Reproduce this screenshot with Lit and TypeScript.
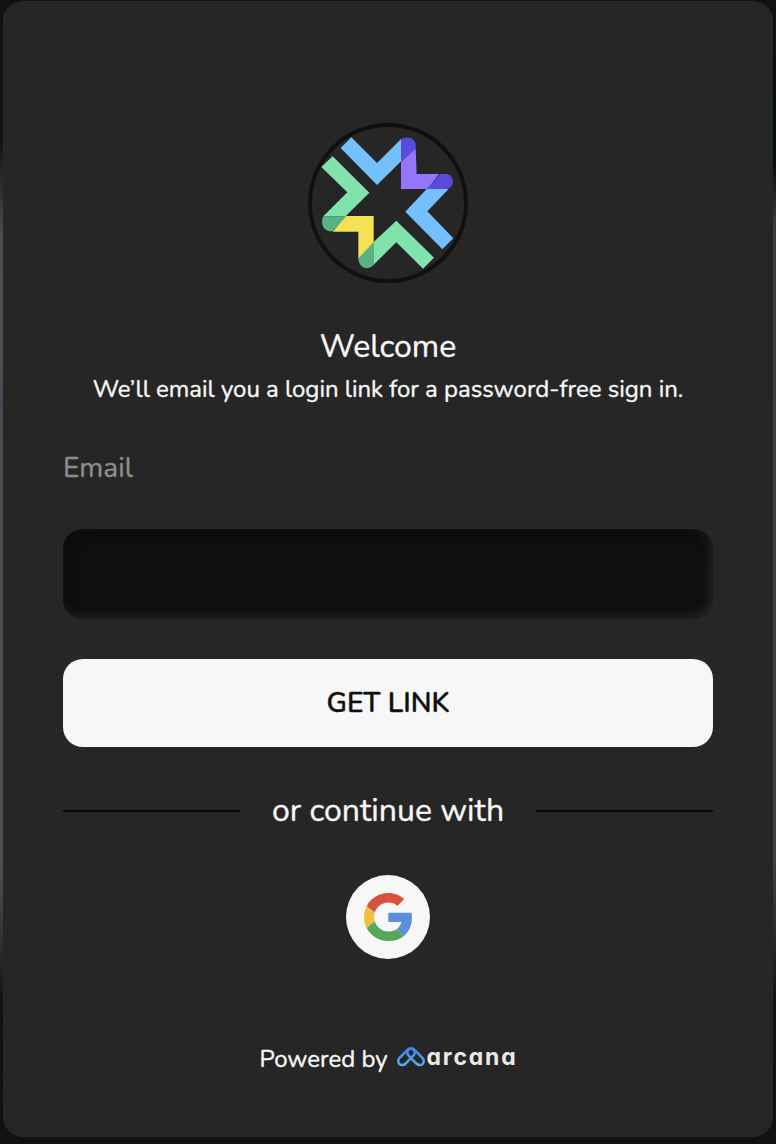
import { LitElement, html, css } from "lit";
import { customElement } from "lit/decorators.js";

@customElement("app-root")
export class AppRoot extends LitElement {
  static styles = css`
    :host {
      display: block;
      box-sizing: border-box;
      height: 1144px;
      padding: 1px 3px 7px;
      background:
        linear-gradient(#131212 0, #131212 140px, #4c4c4c 235px, #515151 340px, #434a56 400px, #4c4c4c 470px, #505050 860px, #404040 910px, #131212 1000px, #111 1144px) left / 50% 100% no-repeat,
        linear-gradient(#131212 0, #0a0e0d 100px, #0a0e0d 165px, #3c3d3c 225px, #3f3f3f 860px, #343434 910px, #131212 1000px, #111 1144px) right / 50% 100% no-repeat;
      font-family: Nunito, Lato, "Open Sans", sans-serif;
      color: #f7f7f7;
    }
    .card {
      box-sizing: border-box;
      height: 1136px;
      padding: 122px 60px 0;
      border-radius: 20px;
      background: #262626;
      display: flex;
      flex-direction: column;
      align-items: center;
      -webkit-text-stroke: 0.35px currentColor;
    }
    .logo { width: 160px; height: 160px; flex: none; }
    h1, p { margin: 0; font-weight: 400; white-space: nowrap; }
    h1 { margin-top: 42px; font-size: 32px; line-height: 44px; }
    .hint { margin-top: 4px; font-size: 24px; line-height: 33px; }
    form { align-self: stretch; display: flex; flex-direction: column; }
    label { margin-top: 43px; font-size: 28px; line-height: 38px; color: #8d8d8d; font-weight: 400; }
    input {
      box-sizing: border-box;
      height: 90px;
      margin: 42px 0 0;
      padding: 0 30px;
      border: 0;
      outline: 0;
      border-radius: 20px;
      background: #101010;
      color: #f7f7f7;
      font: inherit;
      font-size: 28px;
      box-shadow: inset -4px -4px 8px rgba(57, 57, 57, 0.44), inset 10px 10px 20px rgba(11, 11, 11, 0.5);
    }
    button { border: 0; padding: 0; font-family: inherit; }
    .submit {
      height: 88px;
      margin: 40px 0 0;
      border-radius: 20px;
      background: #f7f7f7;
      color: #101010;
      font-size: 28px;
      font-weight: 600;
      letter-spacing: 0;
    }
    .divider {
      align-self: stretch;
      margin-top: 42px;
      height: 44px;
      display: flex;
      align-items: center;
      gap: 32px;
      font-size: 32px;
      line-height: 44px;
      font-weight: 400;
      white-space: nowrap;
    }
    .divider::before, .divider::after { content: ""; flex: 1; height: 2px; background: #080808; }
    .divider span { width: 232px; text-align: center; }
    .google {
      width: 84px;
      height: 84px;
      margin-top: 42px;
      border-radius: 50%;
      background: #f7f7f7;
      display: grid;
      place-items: center;
    }
    .google svg { width: 48px; height: 48px; }
    .footer {
      margin-top: 83px;
      height: 34px;
      display: flex;
      align-items: center;
      font-size: 24px;
      line-height: 34px;
      white-space: nowrap;
    }
    .powered { width: 137px; }
    .mark { width: 28px; height: 20px; margin: 0 2px 4px 0; }
    .brand {
      width: 90px;
      font-family: Inter, sans-serif;
      font-size: 23px;
      font-weight: 700;
      line-height: 28px;
      letter-spacing: 1.8px;
      font-feature-settings: "cv11";
      margin-bottom: 4px;
      color: #e9e9e9;
      -webkit-text-stroke: 0;
    }
  `;

  render() {
    return html`
      <main class="card">
        <svg class="logo" viewBox="24 24 480 480" aria-hidden="true">
          <circle cx="264" cy="264" r="234" fill="none" stroke="#101010" stroke-width="12" />
          <path fill="#74c0fc" d="M154 67 231 144 304 71V138L231 210 122 99Z" />
          <path fill="#74c0fc" d="M380 222H446L382 289 460 370 427 403 316 290Z" />
          <path fill="#80e3ab" d="M98 124 208 233 137 304 70 304 142 232 64 156Z" />
          <path fill="#80e3ab" d="M220 382 289 317 402 428 369 461 289 382 220 450Z" />
          <path fill="#9775fa" d="M303 139 347 100 350 177H418L382 222H303Z" />
          <path fill="#584cdb" d="M303 73C315 64 347 64 347 92V101L303 142Z" />
          <path fill="#584cdb" d="M422 177H437C466 179 466 220 436 222H379Z" />
          <path fill="#f5e154" d="M136 303H221V383L175 433V350H98Z" />
          <path fill="#5ab284" d="M70 304H139L98 349C72 353 59 326 70 304Z" />
          <path fill="#5ab284" d="M221 382V450C206 466 177 463 175 430Z" />
        </svg>
        <h1>Welcome</h1>
        <p class="hint">We’ll email you a login link for a password-free sign in.</p>
        <form @submit=${(e: Event) => e.preventDefault()}>
          <label for="email">Email</label>
          <input id="email" type="email" />
          <button class="submit" type="submit">GET LINK</button>
        </form>
        <div class="divider"><span>or continue with</span></div>
        <button class="google" aria-label="Google">
          <svg viewBox="0 0 48 48">
            <path fill="#da5140" d="M2.6 13.2C6.7 5.3 14.8 0 24.3 0c6.2 0 11.7 2.3 15.9 6.1l-6.8 6.8c-2.3-2.2-5.4-3.4-9.1-3.4-6.3 0-11.6 4.2-13.5 9.9Z" />
            <path fill="#f1bd42" d="M10.8 19.4a14.6 14.6 0 0 0 0 9.2l-8.2 6.3a24 24 0 0 1 0-21.7Z" />
            <path fill="#58a55c" d="M10.8 28.6c1.9 5.7 7.2 9.9 13.5 9.9 3.2 0 6-.8 8.2-2.3l7.9 6.2C36.3 46.1 30.9 48 24.3 48 14.8 48 6.7 42.7 2.6 34.9Z" />
            <path fill="#5b8edc" d="M24.3 19.7h23.2c1.5 8.9-.9 17.5-7.1 22.7l-7.9-6.2c2.7-1.8 4.3-4.4 4.9-7.3H24.3Z" />
          </svg>
        </button>
        <div class="footer">
          <span class="powered">Powered by</span>
          <svg class="mark" viewBox="0 0 28 20" aria-hidden="true">
            <defs>
              <linearGradient id="blue" x1="0" y1="0" x2="0" y2="20" gradientUnits="userSpaceOnUse">
                <stop offset="0" stop-color="#3d83f0" />
                <stop offset="1" stop-color="#55afe5" />
              </linearGradient>
            </defs>
            <g fill="none" stroke="url(#blue)" stroke-width="2.5" stroke-linejoin="round">
              <path d="M14 1.6C12.2 1.6 11 2.2 9.9 3.3L2.4 11.1C.4 13.6 1.2 18 5 18C6.8 18 7.6 17.6 8.7 16.5L16.6 8.3C18.8 6 17.4 1.6 14 1.6" />
              <path d="M14 1.6C15.8 1.6 17 2.2 18.1 3.3L25.6 11.1C27.6 13.6 26.8 18 23 18C21.2 18 20.4 17.6 19.3 16.5L11.4 8.3C9.2 6 10.6 1.6 14 1.6" />
            </g>
          </svg>
          <span class="brand">arcana</span>
        </div>
      </main>
    `;
  }
}
